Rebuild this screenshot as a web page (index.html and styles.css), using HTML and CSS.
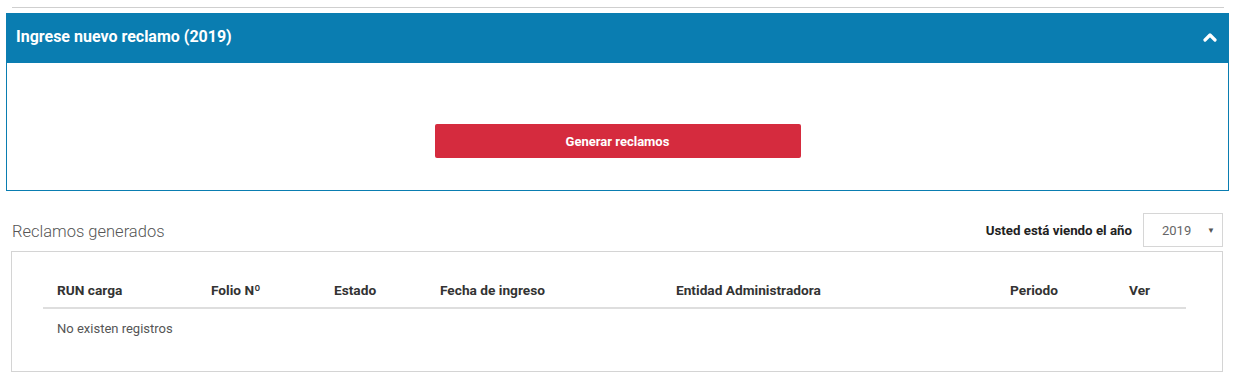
FILE: index.html
```html
<!DOCTYPE html>
<html lang="es">
<head>
    <meta charset="UTF-8">
    <title>Reclamos</title>
    <link rel="stylesheet" href="styles.css">
</head>
<body>
    <div class="page">
        <hr class="top-rule">

        <div class="panel">
            <div class="panel-heading">
                <h3>Ingrese nuevo reclamo (2019)</h3>
                <svg class="chevron" width="14" height="10" viewBox="0 0 14 10">
                    <path d="M2 8 L7 3 L12 8" fill="none" stroke="#fff" stroke-width="3.2" stroke-linecap="round" stroke-linejoin="round"/>
                </svg>
            </div>
            <div class="panel-body">
                <button class="btn-red">Generar reclamos</button>
            </div>
        </div>

        <div class="list-head">
            <h4>Reclamos generados</h4>
            <div class="year-picker">
                <label>Usted está viendo el año</label>
                <div class="select">
                    <span>2019</span>
                    <span class="arrow">&#9660;</span>
                </div>
            </div>
        </div>

        <div class="table-box">
            <table>
                <colgroup>
                    <col style="width:154px">
                    <col style="width:123px">
                    <col style="width:106px">
                    <col style="width:236px">
                    <col style="width:334px">
                    <col style="width:119px">
                    <col style="width:71px">
                </colgroup>
                <thead>
                    <tr>
                        <th>RUN carga</th>
                        <th>Folio Nº</th>
                        <th>Estado</th>
                        <th>Fecha de ingreso</th>
                        <th>Entidad Administradora</th>
                        <th>Periodo</th>
                        <th>Ver</th>
                    </tr>
                </thead>
                <tbody>
                    <tr>
                        <td colspan="7">No existen registros</td>
                    </tr>
                </tbody>
            </table>
        </div>
    </div>
</body>
</html>
```

FILE: styles.css
```css
body {
    font-family: Roboto, "Liberation Sans", sans-serif;
    background-color: white;
    color: #333;
    margin: 0;
    padding: 0;
}

.page {
    padding: 7px 10px 0 6px;
}

.top-rule {
    border: none;
    border-top: 1px solid #cfcfcf;
    margin: 0 5px 5px 6px;
}

.panel {
    border: 1px solid #0a7db1;
}

    .panel-heading {
        background-color: #0a7db1;
        height: 49px;
        display: flex;
        align-items: center;
        justify-content: space-between;
        padding: 0 11px 4px 9px;
        box-sizing: border-box;
    }

        .panel-heading h3 {
            margin: 0;
            color: white;
            font-size: 16px;
            font-weight: bold;
        }

    .panel-body {
        height: 127px;
        display: flex;
        justify-content: center;
        align-items: flex-start;
    }

.btn-red {
    margin-top: 61px;
    width: 366px;
    height: 34px;
    background-color: #d52b3e;
    color: white;
    border: none;
    border-radius: 2px;
    font-family: inherit;
    font-size: 13px;
    font-weight: bold;
}

.list-head {
    display: flex;
    justify-content: space-between;
    align-items: center;
    margin: 22px 6px 4px 6px;
}

    .list-head h4 {
        margin: 0;
        font-size: 16.5px;
        font-weight: 300;
        color: #555;
        padding-top: 2px;
    }

.year-picker {
    display: flex;
    align-items: center;
    gap: 11px;
}

    .year-picker label {
        font-size: 13.3px;
        font-weight: bold;
        color: #222;
    }

.select {
    width: 80px;
    height: 34px;
    box-sizing: border-box;
    border: 1px solid #d6d6d6;
    display: flex;
    align-items: center;
    justify-content: space-between;
    padding: 0 7px 0 18px;
    font-size: 13px;
    color: #666;
}

    .select .arrow {
        font-size: 8px;
        color: #555;
    }

.table-box {
    border: 1px solid #d4d4d4;
    margin: 0 6px 0 5px;
    padding: 25px 36px 26px 31px;
}

table {
    border-collapse: collapse;
    table-layout: fixed;
    width: 1143px;
}

th {
    text-align: left;
    font-size: 13.7px;
    font-weight: bold;
    color: #333;
    padding: 5px 14px 9px 14px;
    border-bottom: 2px solid #dedede;
}

td {
    font-size: 13px;
    color: #555;
    padding: 12px 14px 9px 14px;
}
```
